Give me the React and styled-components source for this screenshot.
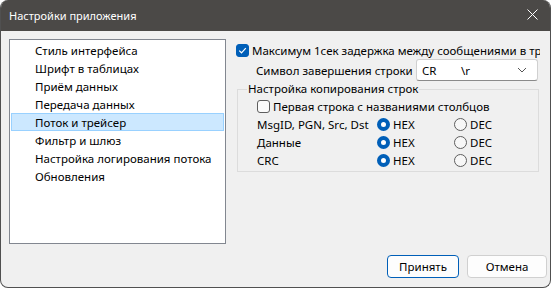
import styled, { createGlobalStyle } from "styled-components";

const GlobalStyle = createGlobalStyle`
  html, body {
    margin: 0;
    padding: 0;
    background: #ffffff;
  }
  body {
    font-family: "Noto Sans", "Liberation Sans", sans-serif;
    font-size: 11.5px;
    color: #000;
  }
`;

const Window = styled.div`
  width: 551px;
  height: 288px;
  box-sizing: border-box;
  border: 1px solid #505050;
  border-top: none;
  border-radius: 8px;
  overflow: hidden;
  display: flex;
  flex-direction: column;
  background: #f0f0f0;
`;

const TitleBar = styled.div`
  height: 31px;
  flex: none;
  background: #4b4947;
  color: #ffffff;
  display: flex;
  align-items: center;
  justify-content: space-between;
  padding: 0 8px 0 8px;
  box-sizing: border-box;
  font-size: 11px;
`;

const CloseButton = styled.div`
  width: 12px;
  height: 12px;
  margin-right: 4px;
  margin-bottom: 2px;
  display: flex;
  align-items: center;
  justify-content: center;
`;

const Body = styled.div`
  flex: 1;
  display: flex;
  flex-direction: column;
  padding: 8px 3px 9px 8px;
`;

const Main = styled.div`
  display: flex;
  gap: 10px;
  height: 205px;
`;

const ListBox = styled.div`
  width: 217px;
  height: 205px;
  box-sizing: border-box;
  border: 1px solid #828790;
  background: #ffffff;
  padding: 1px;
`;

const ListItem = styled.div`
  height: 18px;
  box-sizing: border-box;
  padding-left: 23px;
  display: flex;
  align-items: center;
  border: 1px solid ${(p) => (p.selected ? "#99d1ff" : "transparent")};
  background: ${(p) => (p.selected ? "#cce8ff" : "transparent")};
  white-space: nowrap;
`;

const Panel = styled.div`
  width: 304px;
  overflow: hidden;
  padding-top: 2px;
  display: flex;
  flex-direction: column;
`;

const CheckRow = styled.label`
  height: 18px;
  display: flex;
  align-items: center;
  gap: 3px;
  white-space: nowrap;
`;

const Box = styled.span`
  flex: none;
  width: 13px;
  height: 13px;
  box-sizing: border-box;
  border-radius: 3px;
  display: flex;
  align-items: center;
  justify-content: center;
  background: ${(p) => (p.checked ? "#005fb8" : "#fbfbfb")};
  border: 1px solid ${(p) => (p.checked ? "#005fb8" : "#5e5e5e")};
`;

const ComboRow = styled.div`
  display: grid;
  grid-template-columns: 160px 122px;
  align-items: center;
  padding-left: 20px;
  height: 22px;
  white-space: nowrap;
`;

const Combo = styled.div`
  height: 22px;
  box-sizing: border-box;
  border: 1px solid #d0d0d0;
  border-bottom-color: #8a8a8a;
  border-radius: 3px;
  background: #ffffff;
  display: grid;
  grid-template-columns: 39px 1fr 14px;
  align-items: center;
  padding: 0 6px 0 5px;
`;

const GroupBox = styled.fieldset`
  margin: 0 0 0 1px;
  width: 302px;
  box-sizing: border-box;
  height: 91px;
  border: 1px solid #dcdcdc;
  border-radius: 0;
  padding: 0 0 0 19px;
  white-space: nowrap;
`;

const Legend = styled.legend`
  margin-left: -10px;
  padding: 0 1px;
  line-height: 16px;
`;

const RadioGrid = styled.div`
  display: grid;
  grid-template-columns: 120px 77px 1fr;
  grid-auto-rows: 18px;
  align-items: center;
`;

const RadioLabel = styled.label`
  display: flex;
  align-items: center;
  gap: 3px;
`;

const RadioDot = styled.span`
  flex: none;
  width: 13px;
  height: 13px;
  box-sizing: border-box;
  border-radius: 50%;
  background: ${(p) => (p.checked ? "#ffffff" : "#f7f7f7")};
  border: ${(p) => (p.checked ? "4px solid #005fb8" : "1px solid #5e5e5e")};
`;

const Footer = styled.div`
  margin-top: 11px;
  display: flex;
  justify-content: flex-end;
  gap: 8px;
`;

const Button = styled.button`
  font: inherit;
  color: #000;
  height: 23px;
  width: ${(p) => p.w}px;
  box-sizing: border-box;
  background: #fdfdfd;
  border: 1px solid ${(p) => (p.primary ? "#005fb8" : "#d0d0d0")};
  border-radius: 4px;
  padding: 0;
`;

const Check = () => (
  <svg width="9" height="9" viewBox="0 0 9 9">
    <path d="M1.2 4.6 L3.5 6.8 L7.8 2.2" fill="none" stroke="#fff" strokeWidth="1.2" />
  </svg>
);

const items = [
  "Стиль интерфейса",
  "Шрифт в таблицах",
  "Приём данных",
  "Передача данных",
  "Поток и трейсер",
  "Фильтр и шлюз",
  "Настройка логирования потока",
  "Обновления",
];

const formats = ["MsgID, PGN, Src, Dst", "Данные", "CRC"];

export default function App() {
  return (
    <>
      <GlobalStyle />
      <Window>
        <TitleBar>
          <span>Настройки приложения</span>
          <CloseButton>
            <svg width="11" height="11" viewBox="0 0 11 11">
              <path d="M0.5 0.5 L10.5 10.5 M10.5 0.5 L0.5 10.5" stroke="#fff" strokeWidth="1" />
            </svg>
          </CloseButton>
        </TitleBar>
        <Body>
          <Main>
            <ListBox>
              {items.map((t) => (
                <ListItem key={t} selected={t === "Поток и трейсер"}>
                  {t}
                </ListItem>
              ))}
            </ListBox>
            <Panel>
              <CheckRow>
                <Box checked>
                  <Check />
                </Box>
                Максимум 1сек задержка между сообщениями в трейсере
              </CheckRow>
              <ComboRow>
                <span>Символ завершения строки</span>
                <Combo>
                  <span>CR</span>
                  <span>\r</span>
                  <svg width="10" height="6" viewBox="0 0 10 6">
                    <path d="M1 1 L5 5 L9 1" fill="none" stroke="#555" strokeWidth="1" />
                  </svg>
                </Combo>
              </ComboRow>
              <GroupBox>
                <Legend>Настройка копирования строк</Legend>
                <CheckRow>
                  <Box />
                  Первая строка с названиями столбцов
                </CheckRow>
                <RadioGrid>
                  {formats.map((f) => (
                    <>
                      <span key={f}>{f}</span>
                      <RadioLabel>
                        <RadioDot checked />
                        HEX
                      </RadioLabel>
                      <RadioLabel>
                        <RadioDot />
                        DEC
                      </RadioLabel>
                    </>
                  ))}
                </RadioGrid>
              </GroupBox>
            </Panel>
          </Main>
          <Footer>
            <Button primary w={72}>Принять</Button>
            <Button w={80}>Отмена</Button>
          </Footer>
        </Body>
      </Window>
    </>
  );
}
